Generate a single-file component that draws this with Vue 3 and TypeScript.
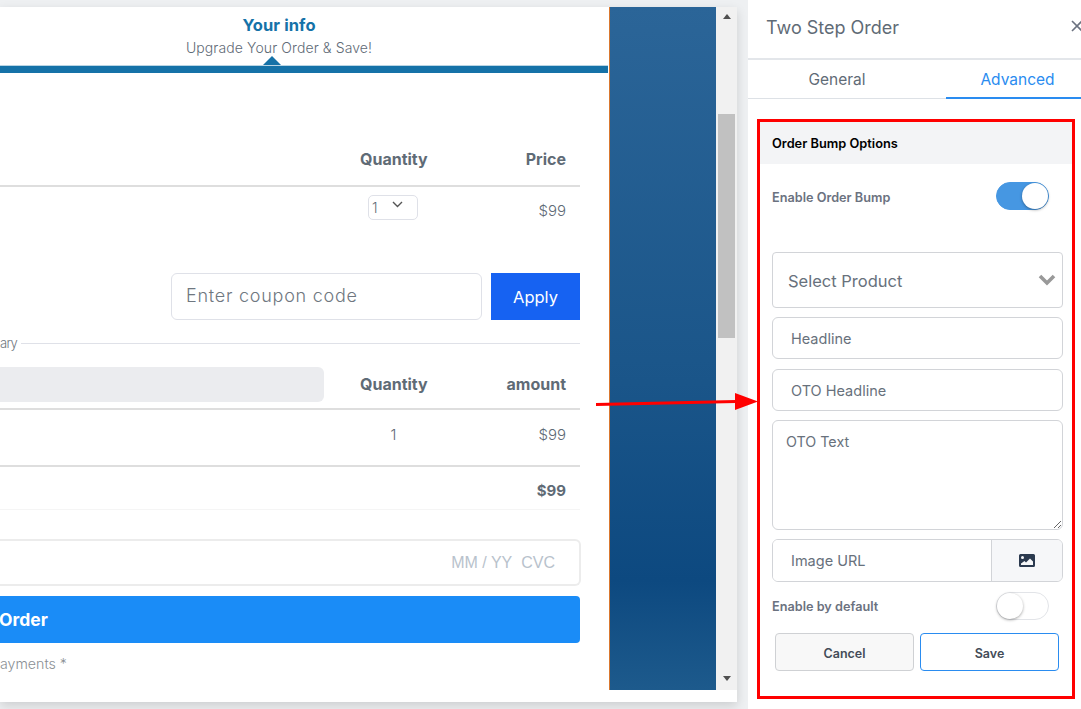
<script setup lang="ts">
interface Row { label: string; value: string }
const tabs: string[] = ['General', 'Advanced']
const summary: Row = { label: '1', value: '$99' }
</script>

<template>
  <div class="app">
    <section class="editor">
      <div class="frame">
        <div class="viewport">
          <div class="page">
            <main class="checkout">
              <header class="step">
                <h2>Your info</h2>
                <p>Upgrade Your Order &amp; Save!</p>
              </header>
              <div class="progress"><span class="caret"></span></div>

              <div class="table-head first">
                <span class="col-q">Quantity</span>
                <span class="col-p">Price</span>
              </div>
              <div class="product-row">
                <span class="qty-select">1
                  <svg width="11" height="7" viewBox="0 0 11 7"><path d="M1 1l4.5 4.5L10 1" fill="none" stroke="#555" stroke-width="1.4" /></svg>
                </span>
                <span class="col-p price">$99</span>
              </div>

              <div class="coupon">
                <input class="coupon-input" placeholder="Enter coupon code" />
                <button class="apply" type="button">Apply</button>
              </div>

              <div class="legend"><span>ary</span><i></i></div>

              <div class="table-head second">
                <span class="pill"></span>
                <span class="col-q">Quantity</span>
                <span class="col-p">amount</span>
              </div>
              <div class="summary-row">
                <span class="col-q light">{{ summary.label }}</span>
                <span class="col-p price">{{ summary.value }}</span>
              </div>
              <div class="total-row"><b class="col-p">$99</b></div>

              <div class="card"><span>MM / YY</span><span>CVC</span></div>
              <button class="submit" type="button">Order</button>
              <p class="note">ayments *</p>
            </main>
            <aside class="bluebar"></aside>
          </div>
          <div class="scrollbar">
            <span class="tri up"></span>
            <span class="thumb"></span>
            <span class="tri down"></span>
          </div>
        </div>
      </div>
    </section>

    <section class="panel">
      <header class="panel-head">
        <h1>Two Step Order</h1>
        <svg class="close" width="12" height="12" viewBox="0 0 12 12"><path d="M1 1l10 10M11 1L1 11" stroke="#6b7280" stroke-width="1.6" /></svg>
      </header>
      <nav class="tabs">
        <span v-for="(t, i) in tabs" :key="t" :class="['tab', { active: i === 1 }]">{{ t }}</span>
      </nav>

      <div class="options">
        <h3>Order Bump Options</h3>
        <div class="opt-body">
          <div class="toggle-row top">
            <label>Enable Order Bump</label>
            <span class="switch on"><span class="knob"></span></span>
          </div>

          <div class="select-box">
            <span>Select Product</span>
            <svg width="18" height="12" viewBox="0 0 18 12"><path d="M2 2l7 7 7-7" fill="none" stroke="#999" stroke-width="3.6" /></svg>
          </div>
          <input class="field headline" placeholder="Headline" />
          <input class="field oto" placeholder="OTO Headline" />
          <textarea class="area">OTO Text</textarea>
          <div class="url">
            <input placeholder="Image URL" />
            <span class="url-btn">
              <svg width="16" height="13" viewBox="0 0 16 13"><path fill="#2b3a4f" fill-rule="evenodd" d="M1.5 0h13A1.5 1.5 0 0 1 16 1.500v10a1.500 1.500 0 0 1-1.500 1.500h-13A1.500 1.500 0 0 1 0 11.500v-10A1.500 1.500 0 0 1 1.500 0zM3.500 2a1.500 1.500 0 1 0 0 3 1.500 1.500 0 0 0 0-3zM2 11h12V7.500L11 4.500 7 8.500 5.500 7 2 9.500z" /></svg>
            </span>
          </div>
          <div class="toggle-row bottom">
            <label>Enable by default</label>
            <span class="switch"><span class="knob"></span></span>
          </div>
          <div class="actions">
            <button class="cancel" type="button">Cancel</button>
            <button class="save" type="button">Save</button>
          </div>
        </div>
      </div>
    </section>

    <svg class="arrow" width="170" height="24" viewBox="0 0 170 24">
      <path d="M0 14.500L140 11.500" stroke="#f00" stroke-width="3" />
      <path d="M139 3l23 8.500L139 20z" fill="#f00" />
    </svg>
  </div>
</template>

<style>
html, body { margin: 0; padding: 0; overflow: hidden; }
</style>

<style scoped>
* { box-sizing: border-box; }
.app {
  position: relative;
  display: flex;
  width: 1081px;
  height: 709px;
  overflow: hidden;
  background: #eef0f2;
  font-family: Inter, "Open Sans", sans-serif;
}
.editor { width: 748px; flex: none; padding-top: 7px; }
.frame {
  width: 737px;
  height: 695px;
  background: #fff;
  box-shadow: 0 4px 10px rgba(0, 0, 0, .14);
}
.viewport { display: flex; height: 683px; }
.page { display: flex; width: 716px; flex: none; }
.checkout { width: 609px; flex: none; color: #5f6b76; }
.bluebar {
  flex: 1;
  border-left: 1px solid #d9782f;
  background: linear-gradient(180deg, #2b6598 0%, #1a5589 55%, #0d4980 84%, #1d5a8c 100%);
}
.scrollbar {
  position: relative;
  width: 21px;
  background: #f1f1f1;
  display: flex;
  flex-direction: column;
  align-items: center;
}
.thumb { position: absolute; top: 107px; left: 2px; width: 17px; height: 224px; background: #c1c1c1; }
.tri { position: absolute; width: 0; height: 0; border-left: 4.500px solid transparent; border-right: 4.500px solid transparent; }
.tri.up { top: 7px; border-bottom: 5px solid #505050; }
.tri.down { bottom: 9px; border-top: 5px solid #505050; }

.step { text-align: center; height: 50px; padding-top: 8px; width: 558px; }
.step h2 { margin: 0; font-size: 16.500px; line-height: 20px; font-weight: 700; letter-spacing: .1px; color: #1572a8; }
.step p { margin: 4px 0 0; font-size: 14px; line-height: 18px; font-weight: 300; letter-spacing: .1px; color: #5f6b76; }
.progress { position: relative; height: 8px; margin-top: 8px; border-top: 1px solid #b9d5e4; background: #1572a8; width: 608px; }
.caret {
  position: absolute; left: 263px; top: -10px; width: 0; height: 0;
  border-left: 9px solid transparent; border-right: 9px solid transparent; border-bottom: 9px solid #1572a8;
}

.table-head { position: relative; display: flex; align-items: center; width: 580px; font-size: 16px; font-weight: 700; color: #5f6b76; border-bottom: 2px solid #dedede; }
.table-head.first { height: 114px; padding-top: 59px; }
.col-q { position: absolute; left: 360px; width: 67px; text-align: center; }
.col-p { margin-left: auto; padding-right: 14px; }
.first .col-q { top: 76px; }
.product-row { position: relative; display: flex; align-items: flex-start; width: 580px; height: 86px; font-size: 15px; font-weight: 300; color: #5f6b76; }
.price { padding-top: 14px; font-weight: 300; }
.qty-select {
  position: absolute; left: 368px; top: 8px; display: flex; align-items: center; justify-content: space-between;
  width: 50px; height: 25px; padding: 0 14px 0 3px; border: 1px solid #dfe1e8; border-radius: 5px; line-height: 24px; font-size: 14px;
}
.qty-select svg { margin-top: -6px; }

.coupon { display: flex; justify-content: flex-end; gap: 9px; width: 580px; height: 47px; }
.coupon-input {
  width: 311px; height: 47px; padding: 0 14px 3px; border: 1px solid #dfe1e8; border-radius: 6px;
  font: 300 18px Inter, sans-serif; letter-spacing: .75px; outline: none;
}
.coupon-input::placeholder { color: #6f7780; opacity: 1; }
.apply { width: 89px; height: 47px; border: 0; background: #1662f2; color: #fff; font: 400 16.500px Inter, sans-serif; }
.legend { display: flex; align-items: center; gap: 4px; width: 580px; height: 18px; margin-top: 14px; font-size: 13px; letter-spacing: -.7px; font-weight: 300; color: #6f7780; }
.legend i { flex: 1; height: 1px; background: #dfe1e8; }

.table-head.second { height: 53px; margin-top: 5px; align-items: flex-start; }
.pill { position: absolute; left: 0; top: 10px; width: 324px; height: 35px; background: #ebecef; border-radius: 0 6px 6px 0; }
.second .col-q { top: 17px; }
.second .col-p { padding-top: 17px; }
.summary-row { position: relative; display: flex; width: 580px; height: 57px; border-bottom: 2px solid #dedede; font-size: 15px; font-weight: 300; color: #5f6b76; }
.summary-row .col-q { top: 15px; }
.summary-row .price { padding-top: 15px; }
.light { font-weight: 300; }
.total-row { display: flex; align-items: center; width: 580px; height: 43px; padding-top: 5px; border-bottom: 1px solid #f5f5f5; font-size: 15px; }
.card {
  display: flex; justify-content: flex-end; align-items: center; gap: 9px; width: 581px; height: 47px; margin-top: 29px; padding-right: 24px;
  border: 2px solid #ececec; border-left: 0; border-radius: 0 6px 6px 0; font: 16px "Liberation Sans", sans-serif; color: #b8c2cc;
}
.submit {
  display: block; width: 580px; height: 47px; margin-top: 10px; padding: 0; border: 0; border-radius: 0 4px 4px 0; background: #1a8cf7;
  color: #fff; font: 700 17.500px Inter, sans-serif; text-align: left; text-indent: -1px;
}
.note { margin: 12px 0 0; font-size: 14.200px; line-height: 18px; font-weight: 300; color: #8a8f94; }

.panel { position: relative; width: 333px; flex: none; height: 709px; background: #fff; overflow: hidden; font-family: Inter, sans-serif; }
.panel-head { display: flex; align-items: center; height: 60px; padding: 0 0 4px 19px; border-bottom: 2px solid #e3e6ea; }
.panel-head h1 { margin: 0 0 0 -1px; font-size: 18px; font-weight: 400; color: #5f6b76; }
.close { position: absolute; left: 323px; top: 20px; }
.tabs { display: flex; height: 39px; border-bottom: 1px solid #dde1e6; }
.tab { display: flex; align-items: center; justify-content: center; font-size: 15.500px; color: #5f6b76; }
.tab:first-child { width: 198px; padding-right: 20px; }
.tab.active { flex: 1; color: #2a8cf0; border-bottom: 2px solid #2a8cf0; height: 39px; padding: 2px 0 0 8px; }

.options { width: 318px; height: 580px; margin: 20px 0 0 9px; border: 3px solid #f00; }
.options h3 { margin: 0; height: 42px; padding: 1px 0 0 12px; line-height: 42px; font-size: 12.800px; font-weight: 600; color: #000; background: #f3f4f6; }
.opt-body { padding: 0 9px 0 12px; display: flex; flex-direction: column; }
.toggle-row { display: flex; align-items: center; justify-content: space-between; font-size: 12.700px; font-weight: 600; color: #6b7280; }
.toggle-row label { padding-top: 2px; }
.toggle-row.top { height: 28px; margin-top: 18px; padding-right: 14px; }
.toggle-row.bottom { height: 29px; margin-top: 9px; padding-right: 14px; }
.switch { position: relative; display: block; width: 53px; height: 28px; border: 1px solid #e2e4e8; border-radius: 14px; background: #fff; }
.switch.on { background: #4697e2; border-color: #4697e2; }
.knob { position: absolute; left: 0; top: 0; width: 26px; height: 26px; border-radius: 50%; background: #fff; box-shadow: 0 1px 3px rgba(0,0,0,.35); }
.switch.on .knob { left: 25px; }

.select-box {
  display: flex; align-items: center; justify-content: space-between; height: 56px; margin-top: 42px; padding: 2px 6px 0 15px;
  border: 1px solid #d2d4d8; border-radius: 4px; font-size: 16.500px; color: #68717c;
}
.select-box svg { margin-top: -2px; }
.field, .url input, .area { font-family: Inter, sans-serif; color: #68717c; outline: none; }
.field { width: 100%; border: 1px solid #d2d4d8; border-radius: 6px; padding: 0 18px; font-size: 14.500px; }
.field::placeholder, .url input::placeholder { color: #68717c; opacity: 1; }
.headline { height: 42px; margin-top: 9px; }
.oto { height: 42px; margin-top: 10px; }
.area { display: block; width: 100%; height: 110px; margin-top: 9px; padding: 12px 13px; border: 1px solid #d2d4d8; border-radius: 6px; font-size: 14.300px; resize: both; }
.url { display: flex; height: 43px; margin-top: 9px; border: 1px solid #d2d4d8; border-radius: 6px; overflow: hidden; }
.url input { width: 218px; border: 0; padding: 0 18px; font-size: 14.500px; }
.url-btn { flex: 1; display: flex; align-items: center; justify-content: center; border-left: 1px solid #d2d4d8; background: #f6f7f9; }
.actions { display: flex; gap: 6px; padding-left: 3px; margin-top: 13px; }
.actions button { width: 139px; height: 38px; padding-top: 3px; border-radius: 4px; font: 600 12.500px Inter, sans-serif; color: #444c58; }
.cancel { background: #f8f8f8; border: 1px solid #cfd1d4; }
.save { background: #fff; border: 1px solid #2a8cf0; }
.arrow { position: absolute; left: 596px; top: 390px; }
</style>
